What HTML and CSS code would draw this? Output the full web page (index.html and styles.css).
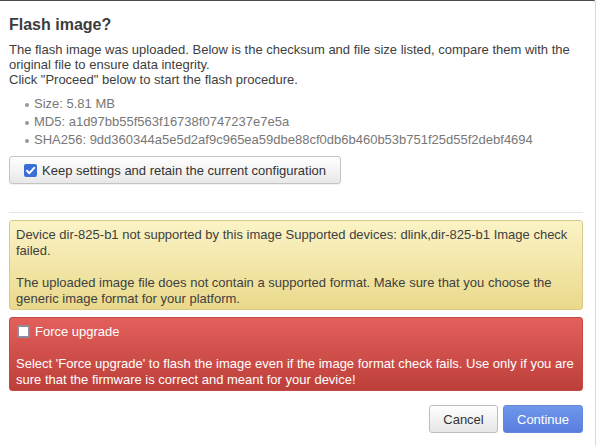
FILE: index.html
```html
<!DOCTYPE html>
<html>
<head>
<meta charset="utf-8">
<link rel="stylesheet" href="styles.css">
</head>
<body>
<div class="modal">
  <h4 class="title">Flash image?</h4>
  <p class="intro">The flash image was uploaded. Below is the checksum and file size listed, compare them with the original file to ensure data integrity.<br>Click "Proceed" below to start the flash procedure.</p>
  <ul class="sums">
    <li>Size: 5.81 MB</li>
    <li>MD5: a1d97bb55f563f16738f0747237e7e5a</li>
    <li>SHA256: 9dd360344a5e5d2af9c965ea59dbe88cf0db6b460b53b751f25d55f2debf4694</li>
  </ul>
  <div class="keep-row">
    <label class="keep-btn">
      <span class="cb cb-on"><svg width="13" height="13" viewBox="0 0 13 13"><path d="M3 6.8 L5.4 9.2 L10.2 3.8" fill="none" stroke="#fff" stroke-width="2" stroke-linecap="round" stroke-linejoin="round"/></svg></span>
      <span class="keep-text">Keep settings and retain the current configuration</span>
    </label>
  </div>
  <hr class="sep">
  <div class="alert warn">Device dir-825-b1 not supported by this image Supported devices: dlink,dir-825-b1 Image check failed.<br><br>The uploaded image file does not contain a supported format. Make sure that you choose the generic image format for your platform.</div>
  <div class="alert danger">
    <label class="force"><span class="cb cb-off"></span>Force upgrade</label><br><br>Select 'Force upgrade' to flash the image even if the image format check fails. Use only if you are sure that the firmware is correct and meant for your device!
  </div>
  <div class="actions">
    <button class="btn">Cancel</button>
    <button class="btn primary">Continue</button>
  </div>
</div>
</body>
</html>
```

FILE: styles.css
```css
html, body {
  margin: 0;
  padding: 0;
  background: #fff;
}
body {
  font-family: "Liberation Sans", Arial, sans-serif;
  font-size: 13px;
  color: #404040;
  width: 596px;
  height: 447px;
  overflow: hidden;
}
.modal {
  border-top: 1px solid #4a4a4a;
  border-right: 1px solid #d8d8d8;
  border-top-right-radius: 3px;
  height: 446px;
  box-sizing: border-box;
  padding: 0 12px 0 9px;
}
.title {
  margin: 14px 0 0 0;
  font-size: 16px;
  font-weight: bold;
  color: #3c3c3c;
  line-height: 19px;
}
.intro {
  margin: 8px 0 0 0;
  line-height: 15px;
}
.sums {
  margin: 8px 0 0 0;
  padding: 0 0 0 25px;
  color: #777;
  line-height: 18px;
}
.sums li {
  list-style: none;
  position: relative;
}
.sums li::before {
  content: "";
  position: absolute;
  left: -9px;
  top: 8px;
  width: 4px;
  height: 4px;
  border-radius: 50%;
  background: #999;
}
.keep-row {
  margin-top: 7px;
  display: flex;
}
.keep-btn {
  display: flex;
  align-items: center;
  gap: 5px;
  height: 28px;
  box-sizing: border-box;
  padding: 0 14px 0 14px;
  border: 1px solid #c4c4c4;
  border-radius: 3px;
  background: linear-gradient(#ffffff, #e8e8e8);
  box-shadow: 0 1px 1px rgba(0,0,0,0.06);
  color: #333;
  white-space: nowrap;
}
.keep-text {
  white-space: nowrap;
}
.cb {
  display: inline-block;
  width: 13px;
  height: 13px;
  box-sizing: border-box;
  border-radius: 2px;
  flex: none;
}
.cb svg { display: block; }
.cb-on {
  background: #3b6fd6;
  margin-top: 1px;
}
.cb-off {
  background: #fff;
  border: 2px solid #8d8d9b;
  border-radius: 2px;
  margin-right: 5px;
  margin-left: 1px;
  vertical-align: -2px;
}
.sep {
  margin: 28px 0 0 0;
  border: 0;
  border-top: 1px solid #e6e6e6;
  width: 574px;
}
.alert {
  width: 574px;
  box-sizing: border-box;
  border-radius: 3px;
  line-height: 16px;
  padding: 6px 8px 2px 6px;
}
.warn {
  margin-top: 7px;
  border: 1px solid #d9ca8c;
  background: linear-gradient(#fbf3c6, #ead98b);
  color: #404040;
}
.danger {
  margin-top: 7px;
  border: 1px solid #c24a45;
  background: linear-gradient(#e35f5c, #bd3f3a);
  color: #fff;
}
.force {
  line-height: 16px;
}
.actions {
  margin-top: 14px;
  width: 574px;
  display: flex;
  justify-content: flex-end;
  gap: 5px;
}
.btn {
  font-family: "Liberation Sans", Arial, sans-serif;
  font-size: 13px;
  height: 28px;
  box-sizing: border-box;
  padding: 0 13px;
  border-radius: 3px;
  border: 1px solid #bdbdbd;
  background: linear-gradient(#ffffff, #e6e6e6);
  color: #333;
  width: 69px;
}
.btn.primary {
  width: 80px;
  border: 1px solid #6488dc;
  background: linear-gradient(#6e97ea, #5a7edf);
  color: #fff;
}
```
